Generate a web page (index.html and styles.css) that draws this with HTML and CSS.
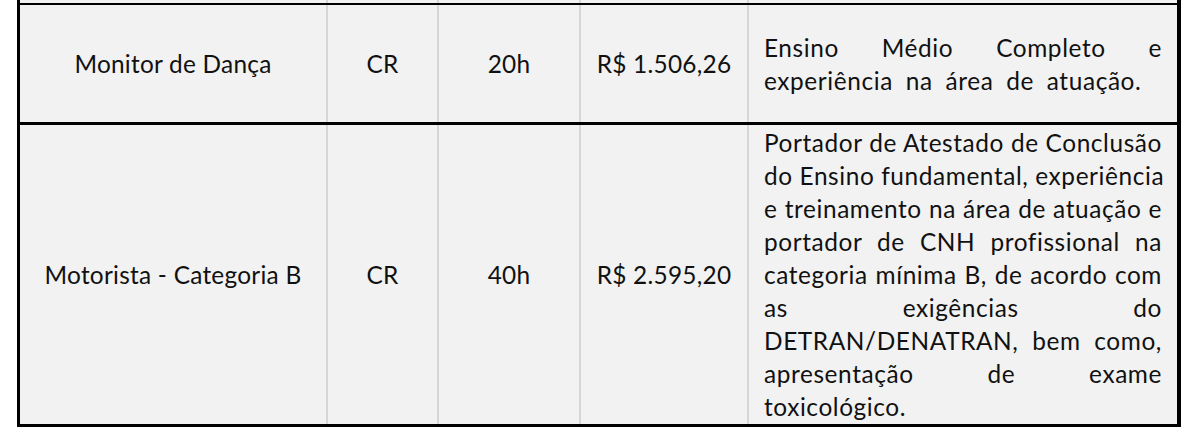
FILE: index.html
```html
<!DOCTYPE html>
<html lang="pt-BR">
<head>
<meta charset="utf-8">
<title>Cargos</title>
<link rel="stylesheet" href="styles.css">
</head>
<body>
<div class="sheet">
  <div class="row stub">
    <div class="cell"></div><div class="cell"></div><div class="cell"></div><div class="cell"></div><div class="cell"></div>
  </div>
  <div class="row r1">
    <div class="cell">Monitor de Dança</div>
    <div class="cell">CR</div>
    <div class="cell">20h</div>
    <div class="cell">R$ 1.506,26</div>
    <div class="cell desc">
      <span class="jl">Ensino Médio Completo e</span>
      <span class="ll">experiência na área de atuação.</span>
    </div>
  </div>
  <div class="row r2">
    <div class="cell">Motorista - Categoria B</div>
    <div class="cell">CR</div>
    <div class="cell">40h</div>
    <div class="cell">R$ 2.595,20</div>
    <div class="cell desc">
      <span class="jl">Portador de Atestado de Conclusão</span>
      <span class="jl">do Ensino fundamental, experiência</span>
      <span class="jl">e treinamento na área de atuação e</span>
      <span class="jl">portador de CNH profissional na</span>
      <span class="jl">categoria mínima B, de acordo com</span>
      <span class="jl">as exigências do</span>
      <span class="jl">DETRAN/DENATRAN, bem como,</span>
      <span class="jl">apresentação de exame</span>
      <span class="ll">toxicológico.</span>
    </div>
  </div>
</div>
</body>
</html>
```

FILE: styles.css
```css
html, body {
  margin: 0;
  padding: 0;
  background: #ffffff;
}

body {
  font-family: Lato, "Open Sans", sans-serif;
  font-size: 24.4px;
  line-height: 33px;
  letter-spacing: 0.25px;
  color: #111111;
}

.sheet {
  margin-left: 17px;
  width: 1157px;
  border-left: 3px solid #000000;
  border-right: 4px solid #000000;
  border-bottom: 3px solid #000000;
  background: #f2f2f2;
}

.row {
  display: grid;
  grid-template-columns: 306px 111px 142px 168px 430px;
}

.stub {
  height: 3px;
}

.r1 {
  border-top: 2px solid #000000;
  height: 117px;
}

.r2 {
  border-top: 3px solid #000000;
  height: 299px;
}

.cell {
  border-left: 2px solid #d6d6d6;
  display: flex;
  align-items: center;
  justify-content: center;
  white-space: nowrap;
}

.cell:first-child {
  border-left: 0;
}

.desc {
  flex-direction: column;
  align-items: stretch;
  justify-content: center;
  padding: 0 15px;
  letter-spacing: 0.6px;
}

.jl {
  display: block;
  text-align: justify;
  text-align-last: justify;
}

.ll {
  display: block;
  text-align: left;
  word-spacing: 6px;
}
```
